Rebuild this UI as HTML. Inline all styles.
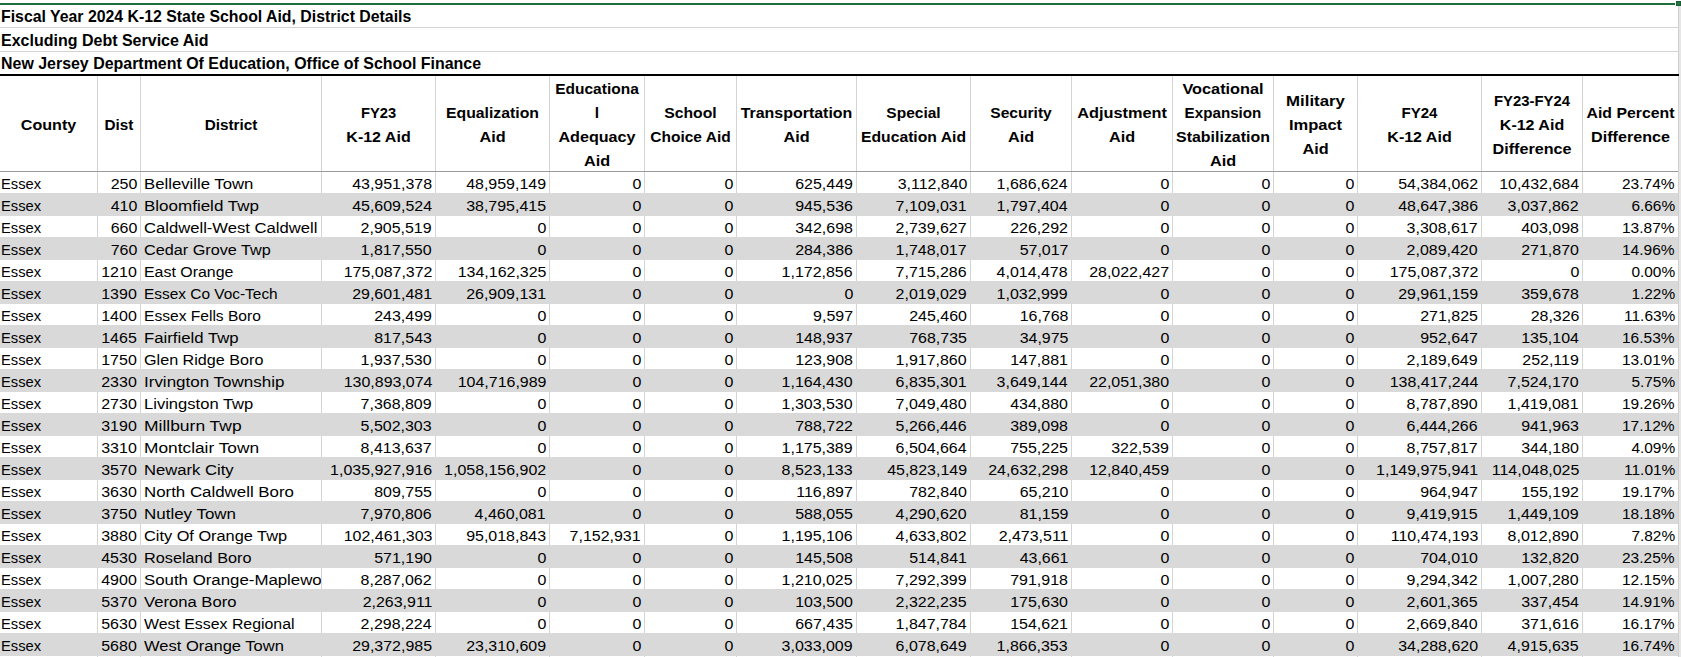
<!DOCTYPE html><html><head><meta charset='utf-8'><style>
html,body{margin:0;padding:0;}
body{width:1681px;height:657px;overflow:hidden;background:#fff;position:relative;font-family:"Liberation Sans",sans-serif;color:#000;}
.a{position:absolute;}
.t{position:absolute;white-space:nowrap;line-height:18px;height:18px;}
.n{font-size:15.2px;text-align:right;}
.n span{display:inline-block;transform-origin:100% 0;}
.s{font-size:15.4px;text-align:left;overflow:hidden;}
.s span{display:inline-block;transform-origin:0 0;}
.h{font-size:15.5px;font-weight:bold;text-align:center;}
.ti{font-size:16.5px;font-weight:bold;left:1px;transform-origin:0 0;}
.vl{position:absolute;width:1px;background:#d4d4d4;}
.hl{position:absolute;height:1px;left:0;}
.sh{position:absolute;left:0;width:1678px;height:23px;background:#d9d9d9;}
</style></head><body>
<div class='a' style='left:0;top:3px;width:1675px;height:2px;background:#1e6e3c'></div>
<div class='a' style='left:1676px;top:1px;width:5px;height:5px;background:#217346;box-shadow:inset 0 0 0 1px #1a5e33'></div>
<div class='a' style='left:1678px;top:6px;width:1px;height:651px;background:#d0d0d0'></div>
<div class='a' style='left:1679px;top:6px;width:2px;height:651px;background:#e6e6e6'></div>
<div class='hl' style='top:27px;width:1678px;background:#d4d4d4'></div>
<div class='hl' style='top:51px;width:1678px;background:#d4d4d4'></div>
<div class='hl' style='top:74px;width:1679px;height:2px;background:#000'></div>
<div class='t ti' style='top:7px;transform:scaleX(0.96)'>Fiscal Year 2024 K-12 State School Aid, District Details</div>
<div class='t ti' style='top:31px;transform:scaleX(0.97)'>Excluding Debt Service Aid</div>
<div class='t ti' style='top:54px;transform:scaleX(0.966)'>New Jersey Department Of Education, Office of School Finance</div>
<div class='vl' style='left:97px;top:76px;height:581px'></div>
<div class='vl' style='left:140px;top:76px;height:581px'></div>
<div class='vl' style='left:321px;top:76px;height:581px'></div>
<div class='vl' style='left:435px;top:76px;height:581px'></div>
<div class='vl' style='left:549px;top:76px;height:581px'></div>
<div class='vl' style='left:644px;top:76px;height:581px'></div>
<div class='vl' style='left:736px;top:76px;height:581px'></div>
<div class='vl' style='left:856px;top:76px;height:581px'></div>
<div class='vl' style='left:970px;top:76px;height:581px'></div>
<div class='vl' style='left:1071px;top:76px;height:581px'></div>
<div class='vl' style='left:1172px;top:76px;height:581px'></div>
<div class='vl' style='left:1273px;top:76px;height:581px'></div>
<div class='vl' style='left:1357px;top:76px;height:581px'></div>
<div class='vl' style='left:1481px;top:76px;height:581px'></div>
<div class='vl' style='left:1582px;top:76px;height:581px'></div>
<div class='hl' style='top:171px;width:1678px;background:#9b9b9b'></div>
<div class='sh' style='top:193px'></div>
<div class='sh' style='top:237px'></div>
<div class='sh' style='top:281px'></div>
<div class='sh' style='top:325px'></div>
<div class='sh' style='top:369px'></div>
<div class='sh' style='top:413px'></div>
<div class='sh' style='top:457px'></div>
<div class='sh' style='top:501px'></div>
<div class='sh' style='top:545px'></div>
<div class='sh' style='top:589px'></div>
<div class='sh' style='top:633px'></div>
<div class='t h' style='left:0px;width:97px;top:116px;transform:scaleX(1.038)'>County</div>
<div class='t h' style='left:98px;width:42px;top:116px;transform:scaleX(0.986)'>Dist</div>
<div class='t h' style='left:141px;width:180px;top:116px;transform:scaleX(0.987)'>District</div>
<div class='t h' style='left:322px;width:113px;top:104px;transform:scaleX(0.95)'>FY23</div>
<div class='t h' style='left:322px;width:113px;top:128px;transform:scaleX(1.033)'>K-12 Aid</div>
<div class='t h' style='left:436px;width:113px;top:104px;transform:scaleX(1.019)'>Equalization</div>
<div class='t h' style='left:436px;width:113px;top:128px;transform:scaleX(1.048)'>Aid</div>
<div class='t h' style='left:550px;width:94px;top:80px;transform:scaleX(1.0)'>Educationa</div>
<div class='t h' style='left:550px;width:94px;top:104px;transform:scaleX(1.0)'>l</div>
<div class='t h' style='left:550px;width:94px;top:128px;transform:scaleX(1.04)'>Adequacy</div>
<div class='t h' style='left:550px;width:94px;top:152px;transform:scaleX(1.048)'>Aid</div>
<div class='t h' style='left:645px;width:91px;top:104px;transform:scaleX(1.016)'>School</div>
<div class='t h' style='left:645px;width:91px;top:128px;transform:scaleX(1.0)'>Choice Aid</div>
<div class='t h' style='left:737px;width:119px;top:104px;transform:scaleX(1.029)'>Transportation</div>
<div class='t h' style='left:737px;width:119px;top:128px;transform:scaleX(1.048)'>Aid</div>
<div class='t h' style='left:857px;width:113px;top:104px;transform:scaleX(1.0)'>Special</div>
<div class='t h' style='left:857px;width:113px;top:128px;transform:scaleX(1.014)'>Education Aid</div>
<div class='t h' style='left:971px;width:100px;top:104px;transform:scaleX(1.005)'>Security</div>
<div class='t h' style='left:971px;width:100px;top:128px;transform:scaleX(1.048)'>Aid</div>
<div class='t h' style='left:1072px;width:100px;top:104px;transform:scaleX(1.052)'>Adjustment</div>
<div class='t h' style='left:1072px;width:100px;top:128px;transform:scaleX(1.048)'>Aid</div>
<div class='t h' style='left:1173px;width:100px;top:80px;transform:scaleX(1.051)'>Vocational</div>
<div class='t h' style='left:1173px;width:100px;top:104px;transform:scaleX(0.979)'>Expansion</div>
<div class='t h' style='left:1173px;width:100px;top:128px;transform:scaleX(1.028)'>Stabilization</div>
<div class='t h' style='left:1173px;width:100px;top:152px;transform:scaleX(1.048)'>Aid</div>
<div class='t h' style='left:1274px;width:83px;top:92px;transform:scaleX(1.085)'>Military</div>
<div class='t h' style='left:1274px;width:83px;top:116px;transform:scaleX(1.065)'>Impact</div>
<div class='t h' style='left:1274px;width:83px;top:140px;transform:scaleX(1.048)'>Aid</div>
<div class='t h' style='left:1358px;width:123px;top:104px;transform:scaleX(0.972)'>FY24</div>
<div class='t h' style='left:1358px;width:123px;top:128px;transform:scaleX(1.033)'>K-12 Aid</div>
<div class='t h' style='left:1482px;width:100px;top:92px;transform:scaleX(0.959)'>FY23-FY24</div>
<div class='t h' style='left:1482px;width:100px;top:116px;transform:scaleX(1.033)'>K-12 Aid</div>
<div class='t h' style='left:1482px;width:100px;top:140px;transform:scaleX(1.04)'>Difference</div>
<div class='t h' style='left:1583px;width:95px;top:104px;transform:scaleX(1.02)'>Aid Percent</div>
<div class='t h' style='left:1583px;width:95px;top:128px;transform:scaleX(1.04)'>Difference</div>
<div class='t s' style='left:0px;width:96px;padding-left:1px;top:175px'><span style='transform:scaleX(0.9579)'>Essex</span></div>
<div class='t n' style='left:38px;width:99px;top:175px'><span style='transform:scaleX(1.0522)'>250</span></div>
<div class='t s' style='left:141px;width:177px;padding-left:3px;top:175px'><span style='transform:scaleX(1.0869)'>Belleville Town</span></div>
<div class='t n' style='left:262px;width:170px;top:175px'><span style='transform:scaleX(1.0505)'>43,951,378</span></div>
<div class='t n' style='left:376px;width:170px;top:175px'><span style='transform:scaleX(1.0505)'>48,959,149</span></div>
<div class='t n' style='left:490px;width:151px;top:175px'><span style='transform:scaleX(1.0522)'>0</span></div>
<div class='t n' style='left:585px;width:148px;top:175px'><span style='transform:scaleX(1.0522)'>0</span></div>
<div class='t n' style='left:677px;width:176px;top:175px'><span style='transform:scaleX(1.051)'>625,449</span></div>
<div class='t n' style='left:797px;width:170px;top:175px'><span style='transform:scaleX(1.0503)'>3,112,840</span></div>
<div class='t n' style='left:911px;width:157px;top:175px'><span style='transform:scaleX(1.0503)'>1,686,624</span></div>
<div class='t n' style='left:1012px;width:157px;top:175px'><span style='transform:scaleX(1.0522)'>0</span></div>
<div class='t n' style='left:1113px;width:157px;top:175px'><span style='transform:scaleX(1.0522)'>0</span></div>
<div class='t n' style='left:1214px;width:140px;top:175px'><span style='transform:scaleX(1.0522)'>0</span></div>
<div class='t n' style='left:1298px;width:180px;top:175px'><span style='transform:scaleX(1.0505)'>54,384,062</span></div>
<div class='t n' style='left:1422px;width:157px;top:175px'><span style='transform:scaleX(1.0505)'>10,432,684</span></div>
<div class='t n' style='left:1523px;width:152px;top:175px'><span style='transform:scaleX(1.0196)'>23.74%</span></div>
<div class='t s' style='left:0px;width:96px;padding-left:1px;top:197px'><span style='transform:scaleX(0.9579)'>Essex</span></div>
<div class='t n' style='left:38px;width:99px;top:197px'><span style='transform:scaleX(1.0522)'>410</span></div>
<div class='t s' style='left:141px;width:177px;padding-left:3px;top:197px'><span style='transform:scaleX(1.1039)'>Bloomfield Twp</span></div>
<div class='t n' style='left:262px;width:170px;top:197px'><span style='transform:scaleX(1.0505)'>45,609,524</span></div>
<div class='t n' style='left:376px;width:170px;top:197px'><span style='transform:scaleX(1.0505)'>38,795,415</span></div>
<div class='t n' style='left:490px;width:151px;top:197px'><span style='transform:scaleX(1.0522)'>0</span></div>
<div class='t n' style='left:585px;width:148px;top:197px'><span style='transform:scaleX(1.0522)'>0</span></div>
<div class='t n' style='left:677px;width:176px;top:197px'><span style='transform:scaleX(1.051)'>945,536</span></div>
<div class='t n' style='left:797px;width:170px;top:197px'><span style='transform:scaleX(1.0503)'>7,109,031</span></div>
<div class='t n' style='left:911px;width:157px;top:197px'><span style='transform:scaleX(1.0503)'>1,797,404</span></div>
<div class='t n' style='left:1012px;width:157px;top:197px'><span style='transform:scaleX(1.0522)'>0</span></div>
<div class='t n' style='left:1113px;width:157px;top:197px'><span style='transform:scaleX(1.0522)'>0</span></div>
<div class='t n' style='left:1214px;width:140px;top:197px'><span style='transform:scaleX(1.0522)'>0</span></div>
<div class='t n' style='left:1298px;width:180px;top:197px'><span style='transform:scaleX(1.0505)'>48,647,386</span></div>
<div class='t n' style='left:1422px;width:157px;top:197px'><span style='transform:scaleX(1.0503)'>3,037,862</span></div>
<div class='t n' style='left:1523px;width:152px;top:197px'><span style='transform:scaleX(1.0132)'>6.66%</span></div>
<div class='t s' style='left:0px;width:96px;padding-left:1px;top:219px'><span style='transform:scaleX(0.9579)'>Essex</span></div>
<div class='t n' style='left:38px;width:99px;top:219px'><span style='transform:scaleX(1.0522)'>660</span></div>
<div class='t s' style='left:141px;width:177px;padding-left:3px;top:219px'><span style='transform:scaleX(1.0802)'>Caldwell-West Caldwell</span></div>
<div class='t n' style='left:262px;width:170px;top:219px'><span style='transform:scaleX(1.0503)'>2,905,519</span></div>
<div class='t n' style='left:376px;width:170px;top:219px'><span style='transform:scaleX(1.0522)'>0</span></div>
<div class='t n' style='left:490px;width:151px;top:219px'><span style='transform:scaleX(1.0522)'>0</span></div>
<div class='t n' style='left:585px;width:148px;top:219px'><span style='transform:scaleX(1.0522)'>0</span></div>
<div class='t n' style='left:677px;width:176px;top:219px'><span style='transform:scaleX(1.051)'>342,698</span></div>
<div class='t n' style='left:797px;width:170px;top:219px'><span style='transform:scaleX(1.0503)'>2,739,627</span></div>
<div class='t n' style='left:911px;width:157px;top:219px'><span style='transform:scaleX(1.051)'>226,292</span></div>
<div class='t n' style='left:1012px;width:157px;top:219px'><span style='transform:scaleX(1.0522)'>0</span></div>
<div class='t n' style='left:1113px;width:157px;top:219px'><span style='transform:scaleX(1.0522)'>0</span></div>
<div class='t n' style='left:1214px;width:140px;top:219px'><span style='transform:scaleX(1.0522)'>0</span></div>
<div class='t n' style='left:1298px;width:180px;top:219px'><span style='transform:scaleX(1.0503)'>3,308,617</span></div>
<div class='t n' style='left:1422px;width:157px;top:219px'><span style='transform:scaleX(1.051)'>403,098</span></div>
<div class='t n' style='left:1523px;width:152px;top:219px'><span style='transform:scaleX(1.0196)'>13.87%</span></div>
<div class='t s' style='left:0px;width:96px;padding-left:1px;top:241px'><span style='transform:scaleX(0.9579)'>Essex</span></div>
<div class='t n' style='left:38px;width:99px;top:241px'><span style='transform:scaleX(1.0522)'>760</span></div>
<div class='t s' style='left:141px;width:177px;padding-left:3px;top:241px'><span style='transform:scaleX(1.0541)'>Cedar Grove Twp</span></div>
<div class='t n' style='left:262px;width:170px;top:241px'><span style='transform:scaleX(1.0503)'>1,817,550</span></div>
<div class='t n' style='left:376px;width:170px;top:241px'><span style='transform:scaleX(1.0522)'>0</span></div>
<div class='t n' style='left:490px;width:151px;top:241px'><span style='transform:scaleX(1.0522)'>0</span></div>
<div class='t n' style='left:585px;width:148px;top:241px'><span style='transform:scaleX(1.0522)'>0</span></div>
<div class='t n' style='left:677px;width:176px;top:241px'><span style='transform:scaleX(1.051)'>284,386</span></div>
<div class='t n' style='left:797px;width:170px;top:241px'><span style='transform:scaleX(1.0503)'>1,748,017</span></div>
<div class='t n' style='left:911px;width:157px;top:241px'><span style='transform:scaleX(1.0508)'>57,017</span></div>
<div class='t n' style='left:1012px;width:157px;top:241px'><span style='transform:scaleX(1.0522)'>0</span></div>
<div class='t n' style='left:1113px;width:157px;top:241px'><span style='transform:scaleX(1.0522)'>0</span></div>
<div class='t n' style='left:1214px;width:140px;top:241px'><span style='transform:scaleX(1.0522)'>0</span></div>
<div class='t n' style='left:1298px;width:180px;top:241px'><span style='transform:scaleX(1.0503)'>2,089,420</span></div>
<div class='t n' style='left:1422px;width:157px;top:241px'><span style='transform:scaleX(1.051)'>271,870</span></div>
<div class='t n' style='left:1523px;width:152px;top:241px'><span style='transform:scaleX(1.0196)'>14.96%</span></div>
<div class='t s' style='left:0px;width:96px;padding-left:1px;top:263px'><span style='transform:scaleX(0.9579)'>Essex</span></div>
<div class='t n' style='left:38px;width:99px;top:263px'><span style='transform:scaleX(1.0522)'>1210</span></div>
<div class='t s' style='left:141px;width:177px;padding-left:3px;top:263px'><span style='transform:scaleX(1.0349)'>East Orange</span></div>
<div class='t n' style='left:262px;width:170px;top:263px'><span style='transform:scaleX(1.0507)'>175,087,372</span></div>
<div class='t n' style='left:376px;width:170px;top:263px'><span style='transform:scaleX(1.0507)'>134,162,325</span></div>
<div class='t n' style='left:490px;width:151px;top:263px'><span style='transform:scaleX(1.0522)'>0</span></div>
<div class='t n' style='left:585px;width:148px;top:263px'><span style='transform:scaleX(1.0522)'>0</span></div>
<div class='t n' style='left:677px;width:176px;top:263px'><span style='transform:scaleX(1.0503)'>1,172,856</span></div>
<div class='t n' style='left:797px;width:170px;top:263px'><span style='transform:scaleX(1.0503)'>7,715,286</span></div>
<div class='t n' style='left:911px;width:157px;top:263px'><span style='transform:scaleX(1.0503)'>4,014,478</span></div>
<div class='t n' style='left:1012px;width:157px;top:263px'><span style='transform:scaleX(1.0505)'>28,022,427</span></div>
<div class='t n' style='left:1113px;width:157px;top:263px'><span style='transform:scaleX(1.0522)'>0</span></div>
<div class='t n' style='left:1214px;width:140px;top:263px'><span style='transform:scaleX(1.0522)'>0</span></div>
<div class='t n' style='left:1298px;width:180px;top:263px'><span style='transform:scaleX(1.0507)'>175,087,372</span></div>
<div class='t n' style='left:1422px;width:157px;top:263px'><span style='transform:scaleX(1.0522)'>0</span></div>
<div class='t n' style='left:1523px;width:152px;top:263px'><span style='transform:scaleX(1.0132)'>0.00%</span></div>
<div class='t s' style='left:0px;width:96px;padding-left:1px;top:285px'><span style='transform:scaleX(0.9579)'>Essex</span></div>
<div class='t n' style='left:38px;width:99px;top:285px'><span style='transform:scaleX(1.0522)'>1390</span></div>
<div class='t s' style='left:141px;width:177px;padding-left:3px;top:285px'><span style='transform:scaleX(1.0019)'>Essex Co Voc-Tech</span></div>
<div class='t n' style='left:262px;width:170px;top:285px'><span style='transform:scaleX(1.0505)'>29,601,481</span></div>
<div class='t n' style='left:376px;width:170px;top:285px'><span style='transform:scaleX(1.0505)'>26,909,131</span></div>
<div class='t n' style='left:490px;width:151px;top:285px'><span style='transform:scaleX(1.0522)'>0</span></div>
<div class='t n' style='left:585px;width:148px;top:285px'><span style='transform:scaleX(1.0522)'>0</span></div>
<div class='t n' style='left:677px;width:176px;top:285px'><span style='transform:scaleX(1.0522)'>0</span></div>
<div class='t n' style='left:797px;width:170px;top:285px'><span style='transform:scaleX(1.0503)'>2,019,029</span></div>
<div class='t n' style='left:911px;width:157px;top:285px'><span style='transform:scaleX(1.0503)'>1,032,999</span></div>
<div class='t n' style='left:1012px;width:157px;top:285px'><span style='transform:scaleX(1.0522)'>0</span></div>
<div class='t n' style='left:1113px;width:157px;top:285px'><span style='transform:scaleX(1.0522)'>0</span></div>
<div class='t n' style='left:1214px;width:140px;top:285px'><span style='transform:scaleX(1.0522)'>0</span></div>
<div class='t n' style='left:1298px;width:180px;top:285px'><span style='transform:scaleX(1.0505)'>29,961,159</span></div>
<div class='t n' style='left:1422px;width:157px;top:285px'><span style='transform:scaleX(1.051)'>359,678</span></div>
<div class='t n' style='left:1523px;width:152px;top:285px'><span style='transform:scaleX(1.0132)'>1.22%</span></div>
<div class='t s' style='left:0px;width:96px;padding-left:1px;top:307px'><span style='transform:scaleX(0.9579)'>Essex</span></div>
<div class='t n' style='left:38px;width:99px;top:307px'><span style='transform:scaleX(1.0522)'>1400</span></div>
<div class='t s' style='left:141px;width:177px;padding-left:3px;top:307px'><span style='transform:scaleX(1.0121)'>Essex Fells Boro</span></div>
<div class='t n' style='left:262px;width:170px;top:307px'><span style='transform:scaleX(1.051)'>243,499</span></div>
<div class='t n' style='left:376px;width:170px;top:307px'><span style='transform:scaleX(1.0522)'>0</span></div>
<div class='t n' style='left:490px;width:151px;top:307px'><span style='transform:scaleX(1.0522)'>0</span></div>
<div class='t n' style='left:585px;width:148px;top:307px'><span style='transform:scaleX(1.0522)'>0</span></div>
<div class='t n' style='left:677px;width:176px;top:307px'><span style='transform:scaleX(1.0505)'>9,597</span></div>
<div class='t n' style='left:797px;width:170px;top:307px'><span style='transform:scaleX(1.051)'>245,460</span></div>
<div class='t n' style='left:911px;width:157px;top:307px'><span style='transform:scaleX(1.0508)'>16,768</span></div>
<div class='t n' style='left:1012px;width:157px;top:307px'><span style='transform:scaleX(1.0522)'>0</span></div>
<div class='t n' style='left:1113px;width:157px;top:307px'><span style='transform:scaleX(1.0522)'>0</span></div>
<div class='t n' style='left:1214px;width:140px;top:307px'><span style='transform:scaleX(1.0522)'>0</span></div>
<div class='t n' style='left:1298px;width:180px;top:307px'><span style='transform:scaleX(1.051)'>271,825</span></div>
<div class='t n' style='left:1422px;width:157px;top:307px'><span style='transform:scaleX(1.0508)'>28,326</span></div>
<div class='t n' style='left:1523px;width:152px;top:307px'><span style='transform:scaleX(1.0196)'>11.63%</span></div>
<div class='t s' style='left:0px;width:96px;padding-left:1px;top:329px'><span style='transform:scaleX(0.9579)'>Essex</span></div>
<div class='t n' style='left:38px;width:99px;top:329px'><span style='transform:scaleX(1.0522)'>1465</span></div>
<div class='t s' style='left:141px;width:177px;padding-left:3px;top:329px'><span style='transform:scaleX(1.0885)'>Fairfield Twp</span></div>
<div class='t n' style='left:262px;width:170px;top:329px'><span style='transform:scaleX(1.051)'>817,543</span></div>
<div class='t n' style='left:376px;width:170px;top:329px'><span style='transform:scaleX(1.0522)'>0</span></div>
<div class='t n' style='left:490px;width:151px;top:329px'><span style='transform:scaleX(1.0522)'>0</span></div>
<div class='t n' style='left:585px;width:148px;top:329px'><span style='transform:scaleX(1.0522)'>0</span></div>
<div class='t n' style='left:677px;width:176px;top:329px'><span style='transform:scaleX(1.051)'>148,937</span></div>
<div class='t n' style='left:797px;width:170px;top:329px'><span style='transform:scaleX(1.051)'>768,735</span></div>
<div class='t n' style='left:911px;width:157px;top:329px'><span style='transform:scaleX(1.0508)'>34,975</span></div>
<div class='t n' style='left:1012px;width:157px;top:329px'><span style='transform:scaleX(1.0522)'>0</span></div>
<div class='t n' style='left:1113px;width:157px;top:329px'><span style='transform:scaleX(1.0522)'>0</span></div>
<div class='t n' style='left:1214px;width:140px;top:329px'><span style='transform:scaleX(1.0522)'>0</span></div>
<div class='t n' style='left:1298px;width:180px;top:329px'><span style='transform:scaleX(1.051)'>952,647</span></div>
<div class='t n' style='left:1422px;width:157px;top:329px'><span style='transform:scaleX(1.051)'>135,104</span></div>
<div class='t n' style='left:1523px;width:152px;top:329px'><span style='transform:scaleX(1.0196)'>16.53%</span></div>
<div class='t s' style='left:0px;width:96px;padding-left:1px;top:351px'><span style='transform:scaleX(0.9579)'>Essex</span></div>
<div class='t n' style='left:38px;width:99px;top:351px'><span style='transform:scaleX(1.0522)'>1750</span></div>
<div class='t s' style='left:141px;width:177px;padding-left:3px;top:351px'><span style='transform:scaleX(1.0497)'>Glen Ridge Boro</span></div>
<div class='t n' style='left:262px;width:170px;top:351px'><span style='transform:scaleX(1.0503)'>1,937,530</span></div>
<div class='t n' style='left:376px;width:170px;top:351px'><span style='transform:scaleX(1.0522)'>0</span></div>
<div class='t n' style='left:490px;width:151px;top:351px'><span style='transform:scaleX(1.0522)'>0</span></div>
<div class='t n' style='left:585px;width:148px;top:351px'><span style='transform:scaleX(1.0522)'>0</span></div>
<div class='t n' style='left:677px;width:176px;top:351px'><span style='transform:scaleX(1.051)'>123,908</span></div>
<div class='t n' style='left:797px;width:170px;top:351px'><span style='transform:scaleX(1.0503)'>1,917,860</span></div>
<div class='t n' style='left:911px;width:157px;top:351px'><span style='transform:scaleX(1.051)'>147,881</span></div>
<div class='t n' style='left:1012px;width:157px;top:351px'><span style='transform:scaleX(1.0522)'>0</span></div>
<div class='t n' style='left:1113px;width:157px;top:351px'><span style='transform:scaleX(1.0522)'>0</span></div>
<div class='t n' style='left:1214px;width:140px;top:351px'><span style='transform:scaleX(1.0522)'>0</span></div>
<div class='t n' style='left:1298px;width:180px;top:351px'><span style='transform:scaleX(1.0503)'>2,189,649</span></div>
<div class='t n' style='left:1422px;width:157px;top:351px'><span style='transform:scaleX(1.051)'>252,119</span></div>
<div class='t n' style='left:1523px;width:152px;top:351px'><span style='transform:scaleX(1.0196)'>13.01%</span></div>
<div class='t s' style='left:0px;width:96px;padding-left:1px;top:373px'><span style='transform:scaleX(0.9579)'>Essex</span></div>
<div class='t n' style='left:38px;width:99px;top:373px'><span style='transform:scaleX(1.0522)'>2330</span></div>
<div class='t s' style='left:141px;width:177px;padding-left:3px;top:373px'><span style='transform:scaleX(1.1038)'>Irvington Township</span></div>
<div class='t n' style='left:262px;width:170px;top:373px'><span style='transform:scaleX(1.0507)'>130,893,074</span></div>
<div class='t n' style='left:376px;width:170px;top:373px'><span style='transform:scaleX(1.0507)'>104,716,989</span></div>
<div class='t n' style='left:490px;width:151px;top:373px'><span style='transform:scaleX(1.0522)'>0</span></div>
<div class='t n' style='left:585px;width:148px;top:373px'><span style='transform:scaleX(1.0522)'>0</span></div>
<div class='t n' style='left:677px;width:176px;top:373px'><span style='transform:scaleX(1.0503)'>1,164,430</span></div>
<div class='t n' style='left:797px;width:170px;top:373px'><span style='transform:scaleX(1.0503)'>6,835,301</span></div>
<div class='t n' style='left:911px;width:157px;top:373px'><span style='transform:scaleX(1.0503)'>3,649,144</span></div>
<div class='t n' style='left:1012px;width:157px;top:373px'><span style='transform:scaleX(1.0505)'>22,051,380</span></div>
<div class='t n' style='left:1113px;width:157px;top:373px'><span style='transform:scaleX(1.0522)'>0</span></div>
<div class='t n' style='left:1214px;width:140px;top:373px'><span style='transform:scaleX(1.0522)'>0</span></div>
<div class='t n' style='left:1298px;width:180px;top:373px'><span style='transform:scaleX(1.0507)'>138,417,244</span></div>
<div class='t n' style='left:1422px;width:157px;top:373px'><span style='transform:scaleX(1.0503)'>7,524,170</span></div>
<div class='t n' style='left:1523px;width:152px;top:373px'><span style='transform:scaleX(1.0132)'>5.75%</span></div>
<div class='t s' style='left:0px;width:96px;padding-left:1px;top:395px'><span style='transform:scaleX(0.9579)'>Essex</span></div>
<div class='t n' style='left:38px;width:99px;top:395px'><span style='transform:scaleX(1.0522)'>2730</span></div>
<div class='t s' style='left:141px;width:177px;padding-left:3px;top:395px'><span style='transform:scaleX(1.0766)'>Livingston Twp</span></div>
<div class='t n' style='left:262px;width:170px;top:395px'><span style='transform:scaleX(1.0503)'>7,368,809</span></div>
<div class='t n' style='left:376px;width:170px;top:395px'><span style='transform:scaleX(1.0522)'>0</span></div>
<div class='t n' style='left:490px;width:151px;top:395px'><span style='transform:scaleX(1.0522)'>0</span></div>
<div class='t n' style='left:585px;width:148px;top:395px'><span style='transform:scaleX(1.0522)'>0</span></div>
<div class='t n' style='left:677px;width:176px;top:395px'><span style='transform:scaleX(1.0503)'>1,303,530</span></div>
<div class='t n' style='left:797px;width:170px;top:395px'><span style='transform:scaleX(1.0503)'>7,049,480</span></div>
<div class='t n' style='left:911px;width:157px;top:395px'><span style='transform:scaleX(1.051)'>434,880</span></div>
<div class='t n' style='left:1012px;width:157px;top:395px'><span style='transform:scaleX(1.0522)'>0</span></div>
<div class='t n' style='left:1113px;width:157px;top:395px'><span style='transform:scaleX(1.0522)'>0</span></div>
<div class='t n' style='left:1214px;width:140px;top:395px'><span style='transform:scaleX(1.0522)'>0</span></div>
<div class='t n' style='left:1298px;width:180px;top:395px'><span style='transform:scaleX(1.0503)'>8,787,890</span></div>
<div class='t n' style='left:1422px;width:157px;top:395px'><span style='transform:scaleX(1.0503)'>1,419,081</span></div>
<div class='t n' style='left:1523px;width:152px;top:395px'><span style='transform:scaleX(1.0196)'>19.26%</span></div>
<div class='t s' style='left:0px;width:96px;padding-left:1px;top:417px'><span style='transform:scaleX(0.9579)'>Essex</span></div>
<div class='t n' style='left:38px;width:99px;top:417px'><span style='transform:scaleX(1.0522)'>3190</span></div>
<div class='t s' style='left:141px;width:177px;padding-left:3px;top:417px'><span style='transform:scaleX(1.1336)'>Millburn Twp</span></div>
<div class='t n' style='left:262px;width:170px;top:417px'><span style='transform:scaleX(1.0503)'>5,502,303</span></div>
<div class='t n' style='left:376px;width:170px;top:417px'><span style='transform:scaleX(1.0522)'>0</span></div>
<div class='t n' style='left:490px;width:151px;top:417px'><span style='transform:scaleX(1.0522)'>0</span></div>
<div class='t n' style='left:585px;width:148px;top:417px'><span style='transform:scaleX(1.0522)'>0</span></div>
<div class='t n' style='left:677px;width:176px;top:417px'><span style='transform:scaleX(1.051)'>788,722</span></div>
<div class='t n' style='left:797px;width:170px;top:417px'><span style='transform:scaleX(1.0503)'>5,266,446</span></div>
<div class='t n' style='left:911px;width:157px;top:417px'><span style='transform:scaleX(1.051)'>389,098</span></div>
<div class='t n' style='left:1012px;width:157px;top:417px'><span style='transform:scaleX(1.0522)'>0</span></div>
<div class='t n' style='left:1113px;width:157px;top:417px'><span style='transform:scaleX(1.0522)'>0</span></div>
<div class='t n' style='left:1214px;width:140px;top:417px'><span style='transform:scaleX(1.0522)'>0</span></div>
<div class='t n' style='left:1298px;width:180px;top:417px'><span style='transform:scaleX(1.0503)'>6,444,266</span></div>
<div class='t n' style='left:1422px;width:157px;top:417px'><span style='transform:scaleX(1.051)'>941,963</span></div>
<div class='t n' style='left:1523px;width:152px;top:417px'><span style='transform:scaleX(1.0196)'>17.12%</span></div>
<div class='t s' style='left:0px;width:96px;padding-left:1px;top:439px'><span style='transform:scaleX(0.9579)'>Essex</span></div>
<div class='t n' style='left:38px;width:99px;top:439px'><span style='transform:scaleX(1.0522)'>3310</span></div>
<div class='t s' style='left:141px;width:177px;padding-left:3px;top:439px'><span style='transform:scaleX(1.1245)'>Montclair Town</span></div>
<div class='t n' style='left:262px;width:170px;top:439px'><span style='transform:scaleX(1.0503)'>8,413,637</span></div>
<div class='t n' style='left:376px;width:170px;top:439px'><span style='transform:scaleX(1.0522)'>0</span></div>
<div class='t n' style='left:490px;width:151px;top:439px'><span style='transform:scaleX(1.0522)'>0</span></div>
<div class='t n' style='left:585px;width:148px;top:439px'><span style='transform:scaleX(1.0522)'>0</span></div>
<div class='t n' style='left:677px;width:176px;top:439px'><span style='transform:scaleX(1.0503)'>1,175,389</span></div>
<div class='t n' style='left:797px;width:170px;top:439px'><span style='transform:scaleX(1.0503)'>6,504,664</span></div>
<div class='t n' style='left:911px;width:157px;top:439px'><span style='transform:scaleX(1.051)'>755,225</span></div>
<div class='t n' style='left:1012px;width:157px;top:439px'><span style='transform:scaleX(1.051)'>322,539</span></div>
<div class='t n' style='left:1113px;width:157px;top:439px'><span style='transform:scaleX(1.0522)'>0</span></div>
<div class='t n' style='left:1214px;width:140px;top:439px'><span style='transform:scaleX(1.0522)'>0</span></div>
<div class='t n' style='left:1298px;width:180px;top:439px'><span style='transform:scaleX(1.0503)'>8,757,817</span></div>
<div class='t n' style='left:1422px;width:157px;top:439px'><span style='transform:scaleX(1.051)'>344,180</span></div>
<div class='t n' style='left:1523px;width:152px;top:439px'><span style='transform:scaleX(1.0132)'>4.09%</span></div>
<div class='t s' style='left:0px;width:96px;padding-left:1px;top:461px'><span style='transform:scaleX(0.9579)'>Essex</span></div>
<div class='t n' style='left:38px;width:99px;top:461px'><span style='transform:scaleX(1.0522)'>3570</span></div>
<div class='t s' style='left:141px;width:177px;padding-left:3px;top:461px'><span style='transform:scaleX(1.081)'>Newark City</span></div>
<div class='t n' style='left:262px;width:170px;top:461px'><span style='transform:scaleX(1.0502)'>1,035,927,916</span></div>
<div class='t n' style='left:376px;width:170px;top:461px'><span style='transform:scaleX(1.0502)'>1,058,156,902</span></div>
<div class='t n' style='left:490px;width:151px;top:461px'><span style='transform:scaleX(1.0522)'>0</span></div>
<div class='t n' style='left:585px;width:148px;top:461px'><span style='transform:scaleX(1.0522)'>0</span></div>
<div class='t n' style='left:677px;width:176px;top:461px'><span style='transform:scaleX(1.0503)'>8,523,133</span></div>
<div class='t n' style='left:797px;width:170px;top:461px'><span style='transform:scaleX(1.0505)'>45,823,149</span></div>
<div class='t n' style='left:911px;width:157px;top:461px'><span style='transform:scaleX(1.0505)'>24,632,298</span></div>
<div class='t n' style='left:1012px;width:157px;top:461px'><span style='transform:scaleX(1.0505)'>12,840,459</span></div>
<div class='t n' style='left:1113px;width:157px;top:461px'><span style='transform:scaleX(1.0522)'>0</span></div>
<div class='t n' style='left:1214px;width:140px;top:461px'><span style='transform:scaleX(1.0522)'>0</span></div>
<div class='t n' style='left:1298px;width:180px;top:461px'><span style='transform:scaleX(1.0502)'>1,149,975,941</span></div>
<div class='t n' style='left:1422px;width:157px;top:461px'><span style='transform:scaleX(1.0507)'>114,048,025</span></div>
<div class='t n' style='left:1523px;width:152px;top:461px'><span style='transform:scaleX(1.0196)'>11.01%</span></div>
<div class='t s' style='left:0px;width:96px;padding-left:1px;top:483px'><span style='transform:scaleX(0.9579)'>Essex</span></div>
<div class='t n' style='left:38px;width:99px;top:483px'><span style='transform:scaleX(1.0522)'>3630</span></div>
<div class='t s' style='left:141px;width:177px;padding-left:3px;top:483px'><span style='transform:scaleX(1.0954)'>North Caldwell Boro</span></div>
<div class='t n' style='left:262px;width:170px;top:483px'><span style='transform:scaleX(1.051)'>809,755</span></div>
<div class='t n' style='left:376px;width:170px;top:483px'><span style='transform:scaleX(1.0522)'>0</span></div>
<div class='t n' style='left:490px;width:151px;top:483px'><span style='transform:scaleX(1.0522)'>0</span></div>
<div class='t n' style='left:585px;width:148px;top:483px'><span style='transform:scaleX(1.0522)'>0</span></div>
<div class='t n' style='left:677px;width:176px;top:483px'><span style='transform:scaleX(1.051)'>116,897</span></div>
<div class='t n' style='left:797px;width:170px;top:483px'><span style='transform:scaleX(1.051)'>782,840</span></div>
<div class='t n' style='left:911px;width:157px;top:483px'><span style='transform:scaleX(1.0508)'>65,210</span></div>
<div class='t n' style='left:1012px;width:157px;top:483px'><span style='transform:scaleX(1.0522)'>0</span></div>
<div class='t n' style='left:1113px;width:157px;top:483px'><span style='transform:scaleX(1.0522)'>0</span></div>
<div class='t n' style='left:1214px;width:140px;top:483px'><span style='transform:scaleX(1.0522)'>0</span></div>
<div class='t n' style='left:1298px;width:180px;top:483px'><span style='transform:scaleX(1.051)'>964,947</span></div>
<div class='t n' style='left:1422px;width:157px;top:483px'><span style='transform:scaleX(1.051)'>155,192</span></div>
<div class='t n' style='left:1523px;width:152px;top:483px'><span style='transform:scaleX(1.0196)'>19.17%</span></div>
<div class='t s' style='left:0px;width:96px;padding-left:1px;top:505px'><span style='transform:scaleX(0.9579)'>Essex</span></div>
<div class='t n' style='left:38px;width:99px;top:505px'><span style='transform:scaleX(1.0522)'>3750</span></div>
<div class='t s' style='left:141px;width:177px;padding-left:3px;top:505px'><span style='transform:scaleX(1.1017)'>Nutley Town</span></div>
<div class='t n' style='left:262px;width:170px;top:505px'><span style='transform:scaleX(1.0503)'>7,970,806</span></div>
<div class='t n' style='left:376px;width:170px;top:505px'><span style='transform:scaleX(1.0503)'>4,460,081</span></div>
<div class='t n' style='left:490px;width:151px;top:505px'><span style='transform:scaleX(1.0522)'>0</span></div>
<div class='t n' style='left:585px;width:148px;top:505px'><span style='transform:scaleX(1.0522)'>0</span></div>
<div class='t n' style='left:677px;width:176px;top:505px'><span style='transform:scaleX(1.051)'>588,055</span></div>
<div class='t n' style='left:797px;width:170px;top:505px'><span style='transform:scaleX(1.0503)'>4,290,620</span></div>
<div class='t n' style='left:911px;width:157px;top:505px'><span style='transform:scaleX(1.0508)'>81,159</span></div>
<div class='t n' style='left:1012px;width:157px;top:505px'><span style='transform:scaleX(1.0522)'>0</span></div>
<div class='t n' style='left:1113px;width:157px;top:505px'><span style='transform:scaleX(1.0522)'>0</span></div>
<div class='t n' style='left:1214px;width:140px;top:505px'><span style='transform:scaleX(1.0522)'>0</span></div>
<div class='t n' style='left:1298px;width:180px;top:505px'><span style='transform:scaleX(1.0503)'>9,419,915</span></div>
<div class='t n' style='left:1422px;width:157px;top:505px'><span style='transform:scaleX(1.0503)'>1,449,109</span></div>
<div class='t n' style='left:1523px;width:152px;top:505px'><span style='transform:scaleX(1.0196)'>18.18%</span></div>
<div class='t s' style='left:0px;width:96px;padding-left:1px;top:527px'><span style='transform:scaleX(0.9579)'>Essex</span></div>
<div class='t n' style='left:38px;width:99px;top:527px'><span style='transform:scaleX(1.0522)'>3880</span></div>
<div class='t s' style='left:141px;width:177px;padding-left:3px;top:527px'><span style='transform:scaleX(1.0604)'>City Of Orange Twp</span></div>
<div class='t n' style='left:262px;width:170px;top:527px'><span style='transform:scaleX(1.0507)'>102,461,303</span></div>
<div class='t n' style='left:376px;width:170px;top:527px'><span style='transform:scaleX(1.0505)'>95,018,843</span></div>
<div class='t n' style='left:490px;width:151px;top:527px'><span style='transform:scaleX(1.0503)'>7,152,931</span></div>
<div class='t n' style='left:585px;width:148px;top:527px'><span style='transform:scaleX(1.0522)'>0</span></div>
<div class='t n' style='left:677px;width:176px;top:527px'><span style='transform:scaleX(1.0503)'>1,195,106</span></div>
<div class='t n' style='left:797px;width:170px;top:527px'><span style='transform:scaleX(1.0503)'>4,633,802</span></div>
<div class='t n' style='left:911px;width:157px;top:527px'><span style='transform:scaleX(1.0503)'>2,473,511</span></div>
<div class='t n' style='left:1012px;width:157px;top:527px'><span style='transform:scaleX(1.0522)'>0</span></div>
<div class='t n' style='left:1113px;width:157px;top:527px'><span style='transform:scaleX(1.0522)'>0</span></div>
<div class='t n' style='left:1214px;width:140px;top:527px'><span style='transform:scaleX(1.0522)'>0</span></div>
<div class='t n' style='left:1298px;width:180px;top:527px'><span style='transform:scaleX(1.0507)'>110,474,193</span></div>
<div class='t n' style='left:1422px;width:157px;top:527px'><span style='transform:scaleX(1.0503)'>8,012,890</span></div>
<div class='t n' style='left:1523px;width:152px;top:527px'><span style='transform:scaleX(1.0132)'>7.82%</span></div>
<div class='t s' style='left:0px;width:96px;padding-left:1px;top:549px'><span style='transform:scaleX(0.9579)'>Essex</span></div>
<div class='t n' style='left:38px;width:99px;top:549px'><span style='transform:scaleX(1.0522)'>4530</span></div>
<div class='t s' style='left:141px;width:177px;padding-left:3px;top:549px'><span style='transform:scaleX(1.0554)'>Roseland Boro</span></div>
<div class='t n' style='left:262px;width:170px;top:549px'><span style='transform:scaleX(1.051)'>571,190</span></div>
<div class='t n' style='left:376px;width:170px;top:549px'><span style='transform:scaleX(1.0522)'>0</span></div>
<div class='t n' style='left:490px;width:151px;top:549px'><span style='transform:scaleX(1.0522)'>0</span></div>
<div class='t n' style='left:585px;width:148px;top:549px'><span style='transform:scaleX(1.0522)'>0</span></div>
<div class='t n' style='left:677px;width:176px;top:549px'><span style='transform:scaleX(1.051)'>145,508</span></div>
<div class='t n' style='left:797px;width:170px;top:549px'><span style='transform:scaleX(1.051)'>514,841</span></div>
<div class='t n' style='left:911px;width:157px;top:549px'><span style='transform:scaleX(1.0508)'>43,661</span></div>
<div class='t n' style='left:1012px;width:157px;top:549px'><span style='transform:scaleX(1.0522)'>0</span></div>
<div class='t n' style='left:1113px;width:157px;top:549px'><span style='transform:scaleX(1.0522)'>0</span></div>
<div class='t n' style='left:1214px;width:140px;top:549px'><span style='transform:scaleX(1.0522)'>0</span></div>
<div class='t n' style='left:1298px;width:180px;top:549px'><span style='transform:scaleX(1.051)'>704,010</span></div>
<div class='t n' style='left:1422px;width:157px;top:549px'><span style='transform:scaleX(1.051)'>132,820</span></div>
<div class='t n' style='left:1523px;width:152px;top:549px'><span style='transform:scaleX(1.0196)'>23.25%</span></div>
<div class='t s' style='left:0px;width:96px;padding-left:1px;top:571px'><span style='transform:scaleX(0.9579)'>Essex</span></div>
<div class='t n' style='left:38px;width:99px;top:571px'><span style='transform:scaleX(1.0522)'>4900</span></div>
<div class='t s' style='left:141px;width:177px;padding-left:3px;top:571px'><span style='transform:scaleX(1.0933)'>South Orange-Maplewood</span></div>
<div class='t n' style='left:262px;width:170px;top:571px'><span style='transform:scaleX(1.0503)'>8,287,062</span></div>
<div class='t n' style='left:376px;width:170px;top:571px'><span style='transform:scaleX(1.0522)'>0</span></div>
<div class='t n' style='left:490px;width:151px;top:571px'><span style='transform:scaleX(1.0522)'>0</span></div>
<div class='t n' style='left:585px;width:148px;top:571px'><span style='transform:scaleX(1.0522)'>0</span></div>
<div class='t n' style='left:677px;width:176px;top:571px'><span style='transform:scaleX(1.0503)'>1,210,025</span></div>
<div class='t n' style='left:797px;width:170px;top:571px'><span style='transform:scaleX(1.0503)'>7,292,399</span></div>
<div class='t n' style='left:911px;width:157px;top:571px'><span style='transform:scaleX(1.051)'>791,918</span></div>
<div class='t n' style='left:1012px;width:157px;top:571px'><span style='transform:scaleX(1.0522)'>0</span></div>
<div class='t n' style='left:1113px;width:157px;top:571px'><span style='transform:scaleX(1.0522)'>0</span></div>
<div class='t n' style='left:1214px;width:140px;top:571px'><span style='transform:scaleX(1.0522)'>0</span></div>
<div class='t n' style='left:1298px;width:180px;top:571px'><span style='transform:scaleX(1.0503)'>9,294,342</span></div>
<div class='t n' style='left:1422px;width:157px;top:571px'><span style='transform:scaleX(1.0503)'>1,007,280</span></div>
<div class='t n' style='left:1523px;width:152px;top:571px'><span style='transform:scaleX(1.0196)'>12.15%</span></div>
<div class='t s' style='left:0px;width:96px;padding-left:1px;top:593px'><span style='transform:scaleX(0.9579)'>Essex</span></div>
<div class='t n' style='left:38px;width:99px;top:593px'><span style='transform:scaleX(1.0522)'>5370</span></div>
<div class='t s' style='left:141px;width:177px;padding-left:3px;top:593px'><span style='transform:scaleX(1.0804)'>Verona Boro</span></div>
<div class='t n' style='left:262px;width:170px;top:593px'><span style='transform:scaleX(1.0503)'>2,263,911</span></div>
<div class='t n' style='left:376px;width:170px;top:593px'><span style='transform:scaleX(1.0522)'>0</span></div>
<div class='t n' style='left:490px;width:151px;top:593px'><span style='transform:scaleX(1.0522)'>0</span></div>
<div class='t n' style='left:585px;width:148px;top:593px'><span style='transform:scaleX(1.0522)'>0</span></div>
<div class='t n' style='left:677px;width:176px;top:593px'><span style='transform:scaleX(1.051)'>103,500</span></div>
<div class='t n' style='left:797px;width:170px;top:593px'><span style='transform:scaleX(1.0503)'>2,322,235</span></div>
<div class='t n' style='left:911px;width:157px;top:593px'><span style='transform:scaleX(1.051)'>175,630</span></div>
<div class='t n' style='left:1012px;width:157px;top:593px'><span style='transform:scaleX(1.0522)'>0</span></div>
<div class='t n' style='left:1113px;width:157px;top:593px'><span style='transform:scaleX(1.0522)'>0</span></div>
<div class='t n' style='left:1214px;width:140px;top:593px'><span style='transform:scaleX(1.0522)'>0</span></div>
<div class='t n' style='left:1298px;width:180px;top:593px'><span style='transform:scaleX(1.0503)'>2,601,365</span></div>
<div class='t n' style='left:1422px;width:157px;top:593px'><span style='transform:scaleX(1.051)'>337,454</span></div>
<div class='t n' style='left:1523px;width:152px;top:593px'><span style='transform:scaleX(1.0196)'>14.91%</span></div>
<div class='t s' style='left:0px;width:96px;padding-left:1px;top:615px'><span style='transform:scaleX(0.9579)'>Essex</span></div>
<div class='t n' style='left:38px;width:99px;top:615px'><span style='transform:scaleX(1.0522)'>5630</span></div>
<div class='t s' style='left:141px;width:177px;padding-left:3px;top:615px'><span style='transform:scaleX(1.031)'>West Essex Regional</span></div>
<div class='t n' style='left:262px;width:170px;top:615px'><span style='transform:scaleX(1.0503)'>2,298,224</span></div>
<div class='t n' style='left:376px;width:170px;top:615px'><span style='transform:scaleX(1.0522)'>0</span></div>
<div class='t n' style='left:490px;width:151px;top:615px'><span style='transform:scaleX(1.0522)'>0</span></div>
<div class='t n' style='left:585px;width:148px;top:615px'><span style='transform:scaleX(1.0522)'>0</span></div>
<div class='t n' style='left:677px;width:176px;top:615px'><span style='transform:scaleX(1.051)'>667,435</span></div>
<div class='t n' style='left:797px;width:170px;top:615px'><span style='transform:scaleX(1.0503)'>1,847,784</span></div>
<div class='t n' style='left:911px;width:157px;top:615px'><span style='transform:scaleX(1.051)'>154,621</span></div>
<div class='t n' style='left:1012px;width:157px;top:615px'><span style='transform:scaleX(1.0522)'>0</span></div>
<div class='t n' style='left:1113px;width:157px;top:615px'><span style='transform:scaleX(1.0522)'>0</span></div>
<div class='t n' style='left:1214px;width:140px;top:615px'><span style='transform:scaleX(1.0522)'>0</span></div>
<div class='t n' style='left:1298px;width:180px;top:615px'><span style='transform:scaleX(1.0503)'>2,669,840</span></div>
<div class='t n' style='left:1422px;width:157px;top:615px'><span style='transform:scaleX(1.051)'>371,616</span></div>
<div class='t n' style='left:1523px;width:152px;top:615px'><span style='transform:scaleX(1.0196)'>16.17%</span></div>
<div class='t s' style='left:0px;width:96px;padding-left:1px;top:637px'><span style='transform:scaleX(0.9579)'>Essex</span></div>
<div class='t n' style='left:38px;width:99px;top:637px'><span style='transform:scaleX(1.0522)'>5680</span></div>
<div class='t s' style='left:141px;width:177px;padding-left:3px;top:637px'><span style='transform:scaleX(1.0736)'>West Orange Town</span></div>
<div class='t n' style='left:262px;width:170px;top:637px'><span style='transform:scaleX(1.0505)'>29,372,985</span></div>
<div class='t n' style='left:376px;width:170px;top:637px'><span style='transform:scaleX(1.0505)'>23,310,609</span></div>
<div class='t n' style='left:490px;width:151px;top:637px'><span style='transform:scaleX(1.0522)'>0</span></div>
<div class='t n' style='left:585px;width:148px;top:637px'><span style='transform:scaleX(1.0522)'>0</span></div>
<div class='t n' style='left:677px;width:176px;top:637px'><span style='transform:scaleX(1.0503)'>3,033,009</span></div>
<div class='t n' style='left:797px;width:170px;top:637px'><span style='transform:scaleX(1.0503)'>6,078,649</span></div>
<div class='t n' style='left:911px;width:157px;top:637px'><span style='transform:scaleX(1.0503)'>1,866,353</span></div>
<div class='t n' style='left:1012px;width:157px;top:637px'><span style='transform:scaleX(1.0522)'>0</span></div>
<div class='t n' style='left:1113px;width:157px;top:637px'><span style='transform:scaleX(1.0522)'>0</span></div>
<div class='t n' style='left:1214px;width:140px;top:637px'><span style='transform:scaleX(1.0522)'>0</span></div>
<div class='t n' style='left:1298px;width:180px;top:637px'><span style='transform:scaleX(1.0505)'>34,288,620</span></div>
<div class='t n' style='left:1422px;width:157px;top:637px'><span style='transform:scaleX(1.0503)'>4,915,635</span></div>
<div class='t n' style='left:1523px;width:152px;top:637px'><span style='transform:scaleX(1.0196)'>16.74%</span></div>
</body></html>
